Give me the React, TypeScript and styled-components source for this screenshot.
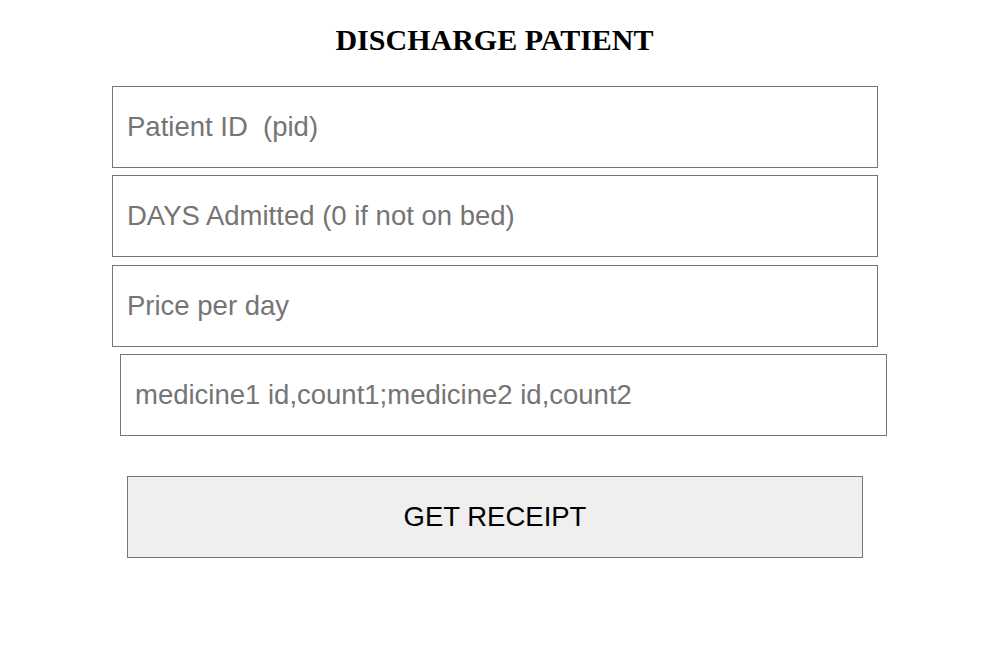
import React from "react";
import styled, { createGlobalStyle } from "styled-components";

const Global = createGlobalStyle`
  html, body { margin: 0; padding: 0; background: #fff; }
  body { font-family: "Liberation Serif", "Times New Roman", serif; }
`;

const Page = styled.div`
  width: 987px;
  display: flex;
  flex-direction: column;
  align-items: flex-start;
`;

const Title = styled.h2`
  align-self: stretch;
  margin: 24px 0 0 0;
  padding-left: 2px;
  text-align: center;
  font-family: "Liberation Serif", "Times New Roman", serif;
  font-weight: bold;
  font-size: 30px;
  line-height: 32px;
  color: #000;
`;

const Form = styled.form`
  display: flex;
  flex-direction: column;
  margin-top: 30px;
`;

const Field = styled.input<{ $shift?: number; $gap?: number; $width?: number }>`
  box-sizing: border-box;
  width: ${(p) => p.$width ?? 766}px;
  height: 82px;
  margin: 0 0 ${(p) => p.$gap ?? 7}px ${(p) => 112 + (p.$shift ?? 0)}px;
  padding: 0 14px;
  border: 1px solid #767676;
  border-radius: 0;
  font-family: "Liberation Sans", Arial, sans-serif;
  font-size: 27.5px;
  color: #000;
  background: #fff;
  outline: none;
  &::placeholder { color: #757575; }
`;

const Submit = styled.button`
  box-sizing: border-box;
  width: 736px;
  height: 82px;
  margin: 33px 0 0 127px;
  border: 1px solid #767676;
  border-radius: 0;
  background: #efefef;
  font-family: "Liberation Sans", Arial, sans-serif;
  font-size: 27.5px;
  color: #000;
`;

export default function App() {
  return (
    <>
      <Global />
      <Page>
        <Title>DISCHARGE PATIENT</Title>
        <Form onSubmit={(e) => e.preventDefault()}>
          <Field placeholder="Patient ID  (pid)" />
          <Field placeholder="DAYS Admitted (0 if not on bed)" $gap={8} />
          <Field placeholder="Price per day" />
          <Field $shift={8} $width={767} placeholder="medicine1 id,count1;medicine2 id,count2" />
          <Submit type="submit">GET RECEIPT</Submit>
        </Form>
      </Page>
    </>
  );
}
